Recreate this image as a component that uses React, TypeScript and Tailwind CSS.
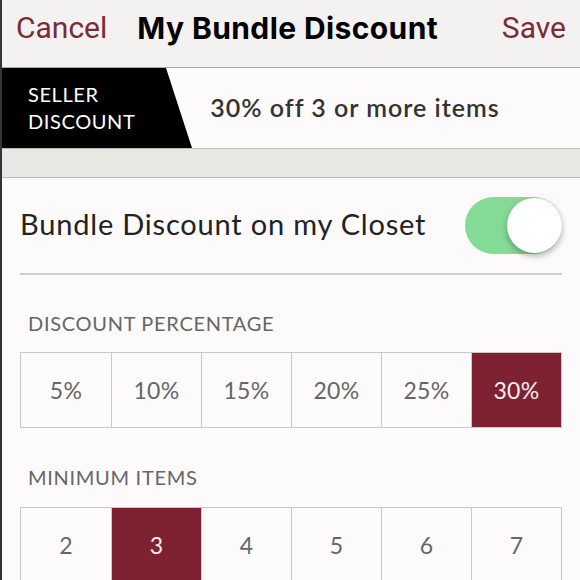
import React from "react";

const percents = ["5%", "10%", "15%", "20%", "25%", "30%"];
const items = ["2", "3", "4", "5", "6", "7"];

const OptionRow = ({ options, selected }: { options: string[]; selected: string }) => (
  <div className="grid grid-cols-6 border-[1.5px] border-[#c9c7c7]">
    {options.map((o, i) => (
      <div
        key={o}
        className={`flex h-[74px] items-center justify-center text-[23px] tracking-[0.3px] ${
          i > 0 ? "border-l-[1.5px] border-[#c9c7c7]" : ""
        } ${o === selected ? "bg-[#7e2130] text-[#f6eef0]" : "text-[#666]"}`}
      >
        {o}
      </div>
    ))}
  </div>
);

export default function App() {
  return (
    <div
      className="h-[580px] w-[580px] overflow-hidden border-l-2 border-[#333] bg-[#fcfafa]"
      style={{ fontFamily: "Lato, 'Open Sans', sans-serif" }}
    >
      {/* nav bar */}
      <div className="flex h-[68px] items-start border-b-[1.5px] border-[#a9a7a6] bg-[#f4f2f1] pt-[10px] font-['Roboto',sans-serif] text-[30px] leading-[36px]">
        <span className="ml-[14px] text-[#7b2a37]">Cancel</span>
        <span className="ml-[30px] font-['Inter',sans-serif] font-bold tracking-[0.4px] text-black">My Bundle Discount</span>
        <span className="ml-auto mr-[14px] text-[#7b2a37]">Save</span>
      </div>

      {/* seller discount banner */}
      <div className="relative flex h-[80px] items-center">
        <div className="absolute inset-y-0 left-0 w-[190px] bg-black [clip-path:polygon(0_0,164px_0,190px_100%,0_100%)]" />
        <div className="relative ml-[26px] text-[20px] leading-[27px] tracking-[0.6px] text-white">
          SELLER
          <br />
          DISCOUNT
        </div>
        <div className="relative ml-[75px] text-[25px] font-semibold tracking-[1px] text-[#333]">
          30% off 3 or more items
        </div>
      </div>

      <div className="h-[30px] border-y-[1.5px] border-[#bdbbb8] bg-[#e9e7e4]" />

      {/* toggle row */}
      <div className="mx-[18px] flex h-[97px] items-center justify-between border-b-2 border-[#cfcdcd]">
        <span className="-mt-[3px] text-[29px] tracking-[0.8px] text-[#222]">Bundle Discount on my Closet</span>
        <div className="relative h-[57px] w-[97px] rounded-full bg-[#84db95]">
          <div className="absolute right-0 top-[1px] h-[55px] w-[55px] rounded-full bg-white shadow-[0_3px_6px_rgba(0,0,0,0.3)]" />
        </div>
      </div>

      <div className="mx-[18px]">
        <div className="mt-[36px] ml-[8px] text-[20px] leading-[24px] tracking-[0.7px] text-[#666]">DISCOUNT PERCENTAGE</div>
        <div className="mt-[17px]">
          <OptionRow options={percents} selected="30%" />
        </div>
        <div className="mt-[37px] ml-[8px] text-[20px] leading-[24px] tracking-[0.7px] text-[#666]">MINIMUM ITEMS</div>
        <div className="mt-[18px]">
          <OptionRow options={items} selected="3" />
        </div>
      </div>
    </div>
  );
}
